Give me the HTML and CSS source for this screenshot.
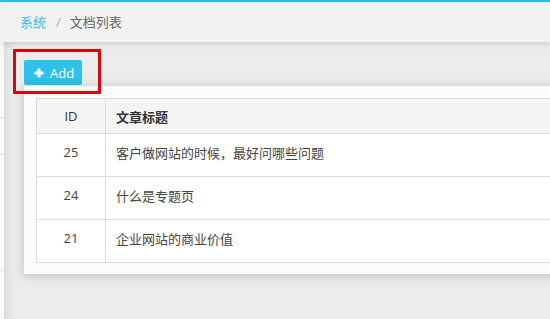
FILE: index.html
```html
<!DOCTYPE html>
<html lang="zh-CN">
<head>
<meta charset="utf-8">
<title>文档列表</title>
<link rel="stylesheet" href="styles.css">
</head>
<body>
<div class="topbar"></div>
<div class="header">
  <a class="crumb-link">系统</a><span class="sep">/</span><span class="crumb">文档列表</span>
</div>
<div class="main">
  <div class="side">
    <div class="side-line l1"></div>
    <div class="side-line l2"></div>
    <div class="side-line l3"></div>
  </div>
  <div class="content">
    <div class="toolbar">
      <button class="btn-add"><svg class="plus" viewBox="0 0 10 10" width="10" height="10"><path d="M5 0.5V9.5M0.5 5H9.5" stroke="#fff" stroke-width="3"/></svg><span>Add</span></button>
    </div>
    <div class="card">
      <table class="list">
        <thead>
          <tr><th class="c-id">ID</th><th class="c-title">文章标题</th></tr>
        </thead>
        <tbody>
          <tr><td class="c-id">25</td><td class="c-title">客户做网站的时候，最好问哪些问题</td></tr>
          <tr><td class="c-id">24</td><td class="c-title">什么是专题页</td></tr>
          <tr><td class="c-id">21</td><td class="c-title">企业网站的商业价值</td></tr>
        </tbody>
      </table>
    </div>
  </div>
</div>
<div class="highlight"></div>
</body>
</html>
```
FILE: styles.css
```css
html, body {
  margin: 0;
  padding: 0;
}
body {
  width: 550px;
  height: 319px;
  overflow: hidden;
  background: #ececec;
  font-family: "Open Sans", "Noto Sans CJK SC", sans-serif;
  font-size: 13px;
  color: #444;
  position: relative;
}
.topbar {
  height: 2px;
  background: #2fc1e9;
}
.header {
  height: 40px;
  line-height: 40px;
  background: #f3f2f2;
  padding-left: 20px;
  box-shadow: 0 2px 6px rgba(0, 0, 0, 0.13);
  position: relative;
  z-index: 2;
}
.crumb-link {
  color: #39bde6;
}
.sep {
  color: #aaa;
  margin: 0 9px 0 10px;
}
.crumb {
  color: #666;
}
.main {
  display: flex;
  height: 277px;
}
.side {
  width: 4px;
  background: #f9f9f9;
  position: relative;
}
.side-line {
  height: 1px;
  background: #e6e6e6;
  margin-top: 75px;
}
.side-line.l2 { margin-top: 36px; }
.side-line.l3 { margin-top: 115px; }
.content {
  flex: 1;
  padding-left: 20px;
  box-shadow: inset 8px 0 10px -6px rgba(0, 0, 0, 0.1);
  overflow: hidden;
}
.toolbar {
  padding-top: 18px;
  height: 25px;
}
.btn-add {
  display: flex;
  align-items: center;
  gap: 6px;
  height: 25px;
  width: 58px;
  padding: 0 0 0 10px;
  border: none;
  border-radius: 2px;
  background: #2ec2e9;
  color: #fff;
  font-family: "Open Sans", sans-serif;
  font-size: 13px;
  font-weight: 500;
}
.plus {
  display: block;
}
.card {
  margin-top: 1px;
  margin-right: -60px;
  padding: 12px 0 11px 12px;
  background: #fbfbfb;
  box-shadow: 0 2px 10px rgba(0, 0, 0, 0.2);
}
.list {
  width: 100%;
  border-collapse: collapse;
  border: 1px solid #dcdcdc;
  background: #fff;
}
.list th, .list td {
  border: 1px solid #dcdcdc;
  padding: 0 10px;
  text-align: left;
}
.list th {
  height: 34px;
  background: #f4f4f4;
  font-weight: 600;
  color: #333;
}
.list th.c-id {
  font-weight: 400;
}
.list td {
  height: 36px;
  vertical-align: middle;
  padding-bottom: 6px;
  color: #444;
}
.list .c-id {
  width: 48px;
  text-align: center;
}
.highlight {
  position: absolute;
  left: 13px;
  top: 49px;
  width: 82px;
  height: 39px;
  border: 3px solid #d8070c;
  border-radius: 1px;
}
```
